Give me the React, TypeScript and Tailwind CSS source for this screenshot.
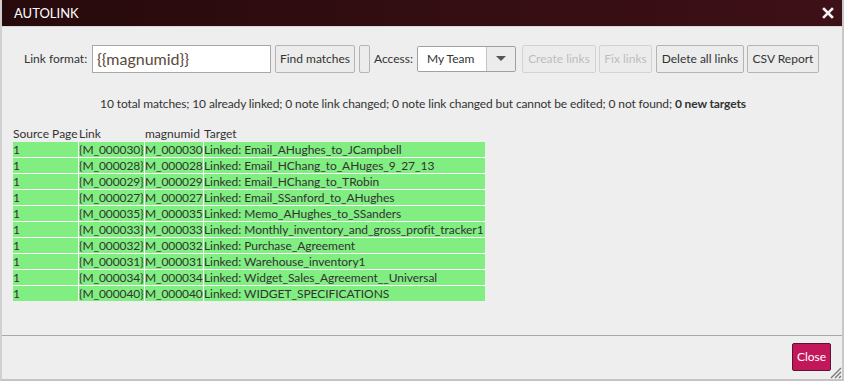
import React from 'react';

const rows = [
  ['30', 'Email_AHughes_to_JCampbell'],
  ['28', 'Email_HChang_to_AHuges_9_27_13'],
  ['29', 'Email_HChang_to_TRobin'],
  ['27', 'Email_SSanford_to_AHughes'],
  ['35', 'Memo_AHughes_to_SSanders'],
  ['33', 'Monthly_inventory_and_gross_profit_tracker1'],
  ['32', 'Purchase_Agreement'],
  ['31', 'Warehouse_inventory1'],
  ['34', 'Widget_Sales_Agreement__Universal'],
  ['40', 'WIDGET_SPECIFICATIONS'],
];

function Btn({ children, disabled, className = '' }: { children?: React.ReactNode; disabled?: boolean; className?: string }) {
  return (
    <button
      className={
        'h-[28px] shrink-0 px-0 rounded-[2px] border text-[12px] whitespace-nowrap bg-[#ececec] ' +
        (disabled ? 'border-[#d2d2d2] text-[#bdbdbd]' : 'border-[#b4b4b4] text-[#333]') +
        ' ' +
        className
      }
    >
      {children}
    </button>
  );
}

export default function App() {
  return (
    <div
      className="w-[844px] h-[381px] bg-[#eeeeee] flex flex-col border-l-2 border-l-[#d0d0d0] border-r-2 border-r-[#c8c8c8] border-b-2 border-b-[#c4c4c4] text-[#333]"
      style={{ fontFamily: 'Lato, "Open Sans", sans-serif' }}
    >
      <div className="h-[27px] shrink-0 bg-gradient-to-r from-[#270a0c] to-[#3e1017] flex items-center justify-between pl-[12px] pr-[8px] border-b border-b-[#d8d8d8]">
        <span className="text-white text-[13px] leading-none">AUTOLINK</span>
        <svg width="12" height="12" viewBox="0 0 12 12">
          <path d="M2 2 L10 10 M10 2 L2 10" stroke="#f2f2f2" strokeWidth="2.6" strokeLinecap="square" />
        </svg>
      </div>

      <div className="flex-1 flex flex-col">
        <div className="flex items-center mt-[18px] pl-[22px] text-[12px]">
          <span className="w-[68px] shrink-0">Link format:</span>
          <div className="w-[179px] shrink-0 h-[28px] bg-white border border-[#a8a8a8] flex items-center px-[4px] text-[16px] text-[#5a4a3a]">
            {'{{magnumid}}'}
          </div>
          <Btn className="ml-[4px] w-[80px]">Find matches</Btn>
          <Btn className="ml-[4px] w-[11px]" />
          <span className="ml-[4px] w-[43px] shrink-0">Access:</span>
          <div className="h-[26px] w-[99px] shrink-0 flex border border-[#a0a0a0] rounded-[2px] overflow-hidden">
            <div className="w-[69px] bg-white flex items-center pl-[9px] text-[12px] border-r border-r-[#c4c4c4]">My Team</div>
            <div className="flex-1 bg-[#ececec] flex items-center justify-center">
              <svg width="10" height="6" viewBox="0 0 10 6">
                <path d="M0 0 H10 L5 5 Z" fill="#555" />
              </svg>
            </div>
          </div>
          <Btn disabled className="ml-[6px] w-[74px]">Create links</Btn>
          <Btn disabled className="ml-[3px] w-[53px]">Fix links</Btn>
          <Btn className="ml-[4px] w-[88px]">Delete all links</Btn>
          <Btn className="ml-[3px] w-[72px]">CSV Report</Btn>
        </div>

        <div className="text-center text-[12px] tracking-[-0.12px] mt-[22px] pl-[2px]">
          10 total matches; 10 already linked; 0 note link changed; 0 note link changed but cannot be edited; 0 not found;{' '}
          <b>0 new targets</b>
        </div>

        <div className="ml-[11px] mt-[13px] text-[12px] leading-[15px]">
          <div className="grid grid-cols-[65px_65px_58px_281px] gap-x-px pb-px whitespace-nowrap">
            <span>Source Page</span>
            <span>Link</span>
            <span>magnumid</span>
            <span>Target</span>
          </div>
          <div className="grid grid-cols-[65px_65px_58px_281px] gap-px bg-white w-max whitespace-nowrap">
            {rows.map(([n, t]) => (
              <React.Fragment key={n}>
                <span className="bg-[#80ee80] h-[15px]">1</span>
                <span className="bg-[#80ee80] h-[15px] tracking-[-0.1px]">{`{M_0000${n}}`}</span>
                <span className="bg-[#80ee80] h-[15px] tracking-[-0.1px]">{`M_0000${n}`}</span>
                <span className="bg-[#80ee80] h-[15px] overflow-hidden tracking-[-0.05px]">Linked: {t}</span>
              </React.Fragment>
            ))}
          </div>
        </div>
      </div>

      <div className="h-[44px] shrink-0 border-t border-t-[#a8a8a8] flex items-start justify-end pt-[7px] pr-[11px] relative">
        <button className="h-[28px] w-[39px] bg-[#c2185b] border border-[#5c1430] rounded-[2px] text-white text-[12px]">Close</button>
        <svg className="absolute right-0 bottom-0" width="14" height="14" viewBox="0 0 14 14">
          <path d="M13 3 L3 13 M13 7 L7 13 M13 11 L11 13" stroke="#777" strokeWidth="1.3" />
        </svg>
      </div>
    </div>
  );
}
